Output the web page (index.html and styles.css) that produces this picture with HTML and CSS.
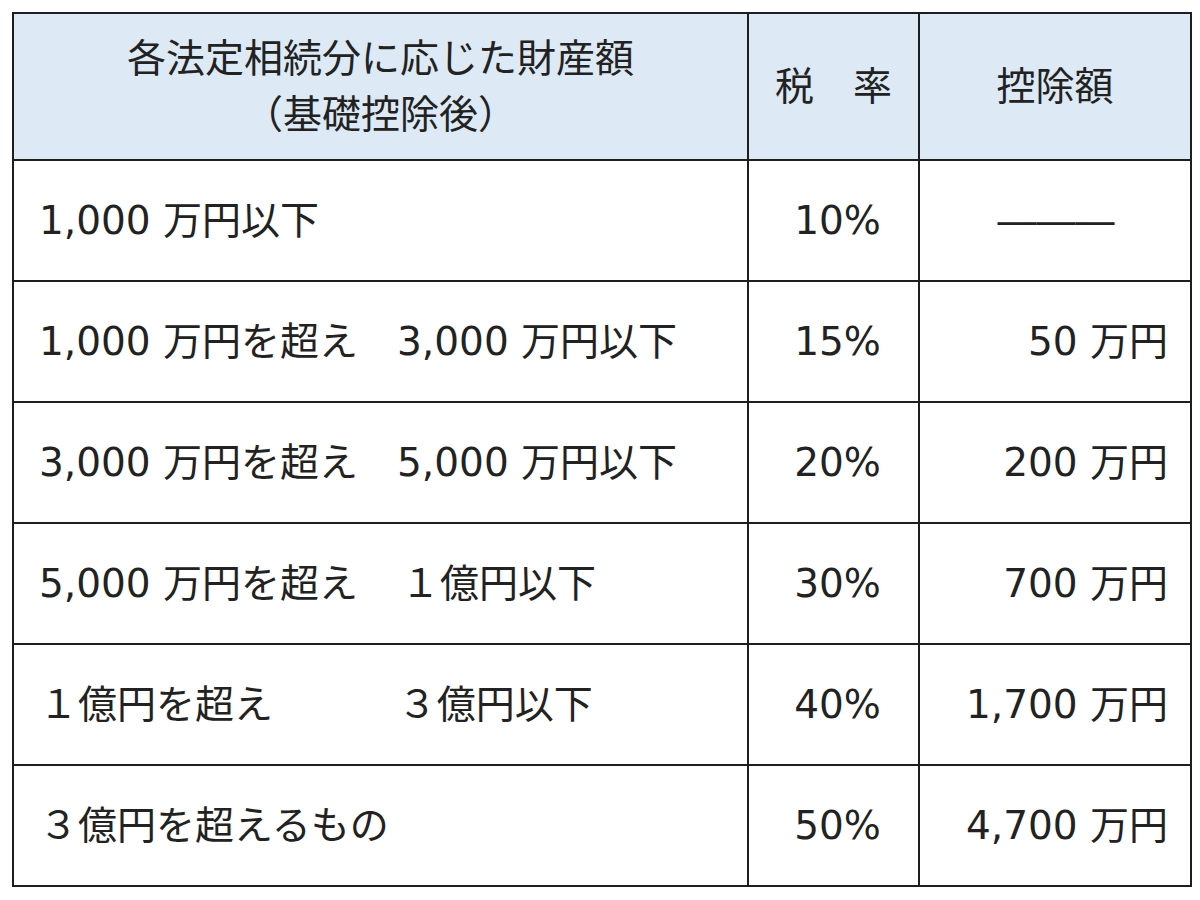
FILE: index.html
```html
<!DOCTYPE html>
<html lang="ja">
<head>
<meta charset="utf-8">
<title>相続税の速算表</title>
<link rel="stylesheet" href="styles.css">
</head>
<body>
<table class="tax-table">
  <colgroup>
    <col class="col-amount">
    <col class="col-rate">
    <col class="col-deduct">
  </colgroup>
  <thead>
    <tr class="head-row">
      <th class="h-amount">各法定相続分に応じた財産額<br>（基礎控除後）</th>
      <th class="h-rate">税　率</th>
      <th class="h-deduct">控除額</th>
    </tr>
  </thead>
  <tbody>
    <tr class="body-row">
      <td class="c-amount">1,000 万円以下</td>
      <td class="c-rate">10%</td>
      <td class="c-deduct c-dash">―――</td>
    </tr>
    <tr class="body-row">
      <td class="c-amount">1,000 万円を超え　3,000 万円以下</td>
      <td class="c-rate">15%</td>
      <td class="c-deduct">50 万円</td>
    </tr>
    <tr class="body-row">
      <td class="c-amount">3,000 万円を超え　5,000 万円以下</td>
      <td class="c-rate">20%</td>
      <td class="c-deduct">200 万円</td>
    </tr>
    <tr class="body-row">
      <td class="c-amount">5,000 万円を超え　&#8202;１億円以下</td>
      <td class="c-rate">30%</td>
      <td class="c-deduct">700 万円</td>
    </tr>
    <tr class="body-row">
      <td class="c-amount">１億円を超え　　　&#8201;３億円以下</td>
      <td class="c-rate">40%</td>
      <td class="c-deduct">1,700 万円</td>
    </tr>
    <tr class="body-row">
      <td class="c-amount">３億円を超えるもの</td>
      <td class="c-rate">50%</td>
      <td class="c-deduct">4,700 万円</td>
    </tr>
  </tbody>
</table>
</body>
</html>
```

FILE: styles.css
```css
html, body {
  margin: 0;
  padding: 0;
  background: #ffffff;
}

body {
  padding: 12px 0 0 12px;
  font-family: "DejaVu Sans", "Noto Sans CJK JP", sans-serif;
  color: #222222;
}

.tax-table {
  border-collapse: collapse;
  table-layout: fixed;
  width: 1178px;
  font-size: 39px;
  font-weight: 400;
}

.col-amount { width: 735px; }
.col-rate { width: 171px; }
.col-deduct { width: 272px; }

.tax-table .head-row th,
.tax-table .body-row td {
  border: 2px solid #1e1e1e;
  padding: 0;
  white-space: nowrap;
  vertical-align: middle;
}

.tax-table .head-row th {
  height: 145px;
  background: #dde9f5;
  font-weight: 400;
  text-align: center;
  line-height: 56px;
}

.tax-table .body-row td {
  height: 119px;
  line-height: 48px;
}

.tax-table .body-row .c-amount {
  text-align: left;
  padding-left: 25px;
}

.tax-table .body-row .c-rate {
  text-align: center;
  padding-left: 8px;
}

.tax-table .body-row .c-deduct {
  text-align: right;
  padding-right: 22px;
}

.tax-table .body-row .c-dash {
  text-align: center;
  padding-right: 0;
  padding-left: 2px;
}
```
